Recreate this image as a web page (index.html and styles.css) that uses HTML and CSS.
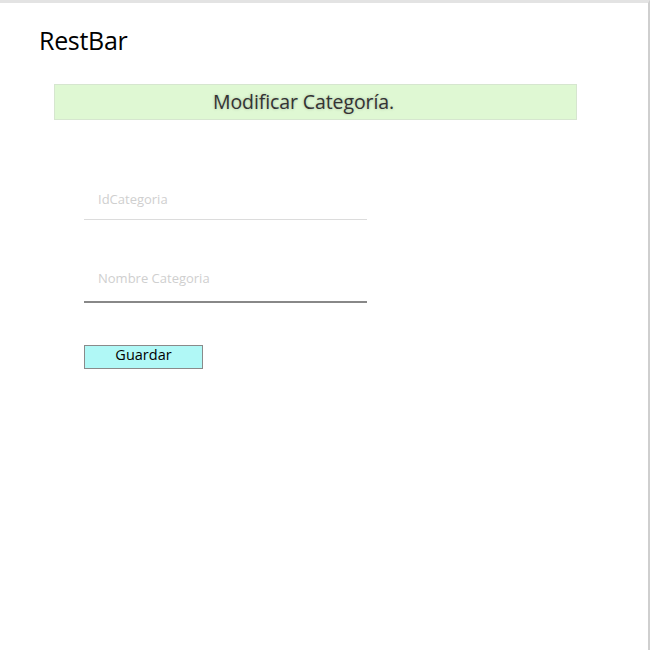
FILE: index.html
```html
<!DOCTYPE html>
<html lang="es">
<head>
<meta charset="utf-8">
<title>RestBar</title>
<link rel="stylesheet" href="styles.css">
</head>
<body>
<div class="window">
  <h1 class="brand">RestBar</h1>
  <div class="banner">Modificar Categoría.</div>
  <form class="form">
    <div class="field"><input class="input" type="text" placeholder="IdCategoria"></div>
    <div class="field field-active"><input class="input" type="text" placeholder="Nombre Categoria"></div>
    <button class="btn" type="button">Guardar</button>
  </form>
</div>
</body>
</html>
```
FILE: styles.css
```css
html, body {
  margin: 0;
  padding: 0;
  background: #ffffff;
}
body {
  font-family: "Open Sans", "Noto Sans", sans-serif;
}
.window {
  box-sizing: border-box;
  width: 650px;
  height: 650px;
  border-top: 3px solid #e3e3e3;
  border-right: 2px solid #cfcfcf;
  padding: 22px 0 0 39px;
}
.brand {
  margin: 0;
  font-weight: 400;
  font-size: 25px;
  line-height: 30px;
  color: #000;
  letter-spacing: -0.3px;
}
.banner {
  box-sizing: border-box;
  margin: 29px 0 0 15px;
  width: 523px;
  height: 36px;
  padding-right: 24px;
  background: #dff8d3;
  border: 1px solid #d6e6cf;
  text-align: center;
  font-size: 19.5px;
  line-height: 33px;
  color: #333;
  text-shadow: 0 0 3px rgba(0,0,0,0.25);
  letter-spacing: -0.1px;
}
.form {
  margin: 0 0 0 45px;
  display: flex;
  flex-direction: column;
  align-items: flex-start;
}
.field {
  width: 283px;
  margin-top: 61px;
}
.field + .field {
  margin-top: 43px;
}
.input {
  box-sizing: border-box;
  display: block;
  width: 283px;
  height: 39px;
  border: 0;
  border-bottom: 1px solid #dcdcdc;
  padding: 0 0 3px 14px;
  font-family: "Open Sans", "Noto Sans", sans-serif;
  font-size: 13px;
  background: transparent;
  outline: none;
}
.input::placeholder {
  color: #cfcfcf;
}
.field-active .input {
  border-bottom: 2px solid #888;
  height: 40px;
  padding-bottom: 8px;
}
.btn {
  box-sizing: border-box;
  margin-top: 42px;
  width: 119px;
  height: 24px;
  background: #b0f8f6;
  border: 1px solid #8a8a8a;
  padding: 0 0 4px;
  font-family: "Open Sans", "Noto Sans", sans-serif;
  font-size: 14.5px;
  line-height: 18px;
  color: #000;
}
```
